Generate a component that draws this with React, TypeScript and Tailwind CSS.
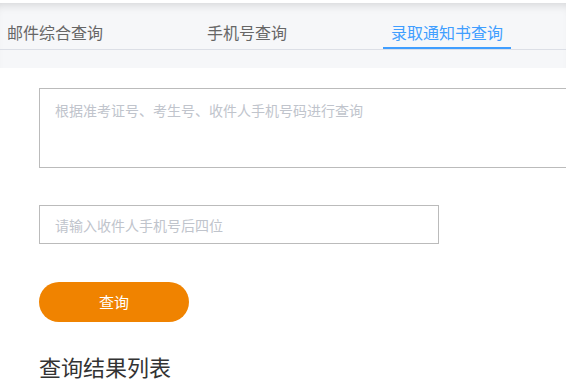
import React from "react";

export default function App() {
  return (
    <div
      className="w-[566px] h-[381px] overflow-hidden bg-white"
      style={{ fontFamily: '"Noto Sans CJK SC", "Noto Sans", sans-serif' }}
    >
      <div className="h-[3px] bg-white" />
      <div className="h-[65px] bg-[#f6f7f9] shadow-[inset_0_8px_10px_-6px_rgba(0,0,0,0.14)]">
        <div className="flex border-b border-[#dcdfe6] h-[47px]">
          <div className="ml-[7px] pt-[18px] h-[46px] text-[16px] leading-[22px] text-[#666]">
            邮件综合查询
          </div>
          <div className="ml-[104px] pt-[18px] h-[46px] text-[16px] leading-[22px] text-[#666]">
            手机号查询
          </div>
          <div className="ml-[96px] px-[8px] pt-[18px] h-[46px] text-[16px] leading-[22px] text-[#409eff] border-b-2 border-[#409eff]">
            录取通知书查询
          </div>
        </div>
      </div>
      <div className="pl-[39px]">
        <textarea
          className="block mt-[20px] w-[540px] h-[80px] border border-[#bbbbbb] pl-[15px] pt-[11px] text-[14px] leading-[20px] resize-none outline-none placeholder:text-[#c0c4cc]"
          placeholder="根据准考证号、考生号、收件人手机号码进行查询"
        />
        <input
          className="block mt-[37px] w-[400px] h-[39px] border border-[#bbbbbb] pl-[15px] text-[14px] outline-none placeholder:text-[#c0c4cc]"
          placeholder="请输入收件人手机号后四位"
        />
        <button className="block mt-[38px] w-[150px] h-[40px] rounded-full bg-[#f08300] text-white text-[15px] leading-[40px]">
          查询
        </button>
        <div className="mt-[29px] text-[22px] leading-[30px] text-[#333]">
          查询结果列表
        </div>
      </div>
    </div>
  );
}
